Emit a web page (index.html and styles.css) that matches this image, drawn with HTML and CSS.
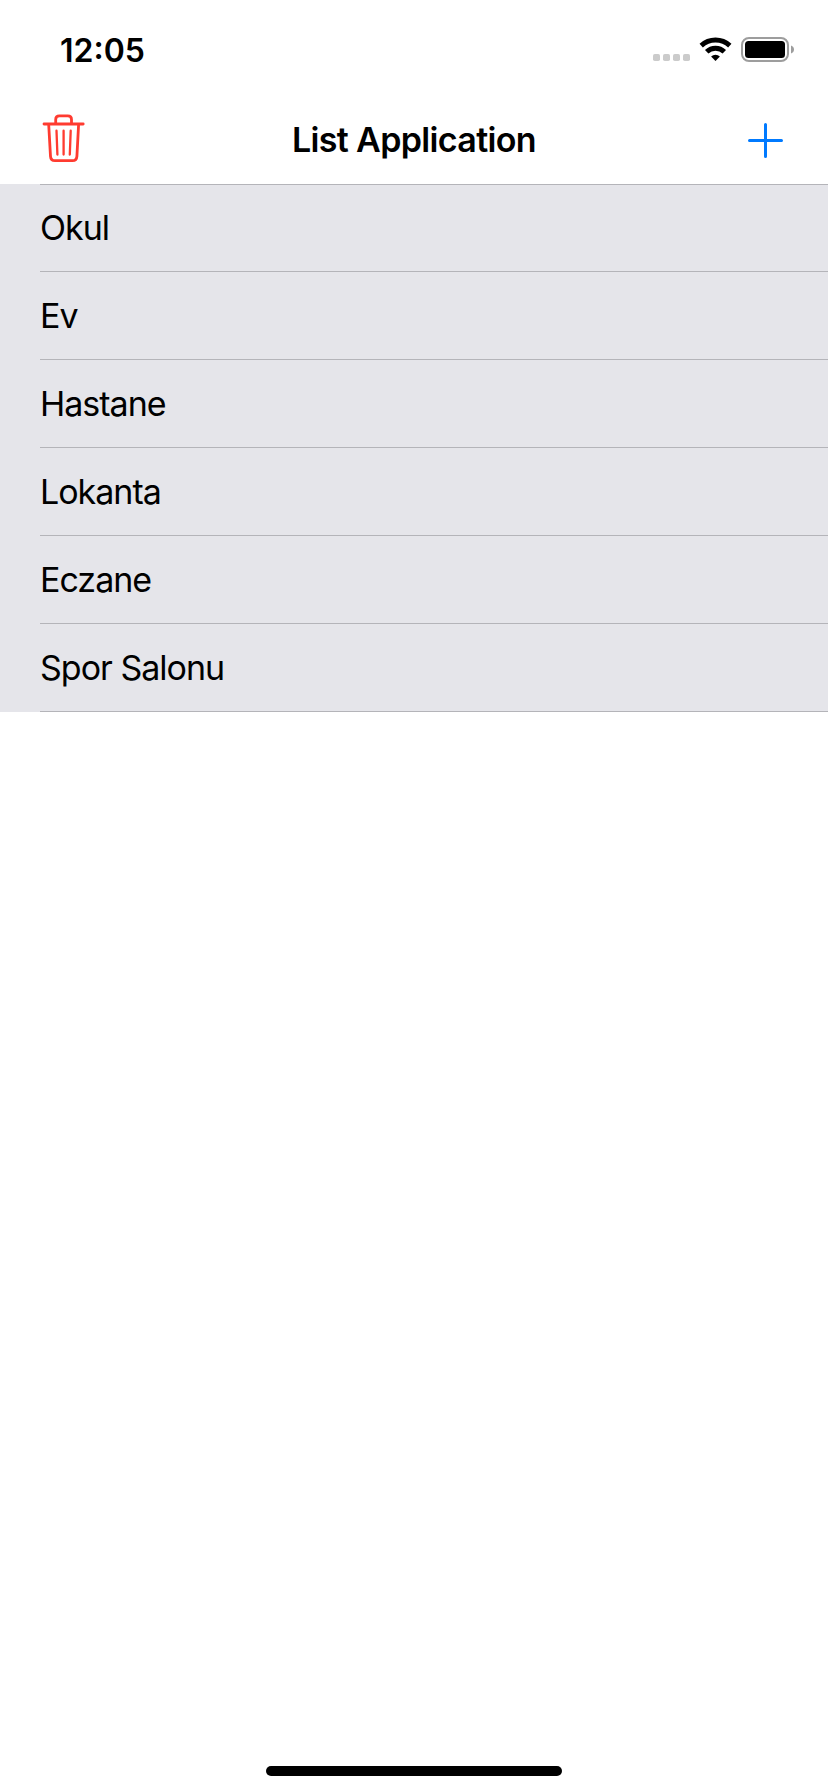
FILE: index.html
```html
<!DOCTYPE html>
<html lang="tr">
<head>
<meta charset="utf-8">
<title>List Application</title>
<link rel="stylesheet" href="styles.css">
</head>
<body>
<div class="screen">
  <header class="status">
    <span class="time">12:05</span>
    <svg class="indicators" width="144" height="30" viewBox="650 34 144 30">
      <g fill="#cbcbcb">
        <rect x="653" y="54" width="7" height="7" rx="1.8"/>
        <rect x="663" y="54" width="7" height="7" rx="1.8"/>
        <rect x="673" y="54" width="7" height="7" rx="1.8"/>
        <rect x="683" y="54" width="7" height="7" rx="1.8"/>
      </g>
      <path d="M701.2 45.6A21 21 0 0 1 729.8 45.6" fill="none" stroke="#000" stroke-width="4.9"/>
      <path d="M706.7 51.8A12.5 12.5 0 0 1 724.3 51.8" fill="none" stroke="#000" stroke-width="4.9"/>
      <path d="M711.1 56.4A6.6 6.6 0 0 1 719.9 56.4L715.5 60.9Z"/>
      <rect x="742" y="38" width="46" height="23" rx="7" fill="none" stroke="#9d9d9d" stroke-width="2"/>
      <rect x="745" y="41" width="40" height="17" rx="3.5"/>
      <path d="M791 45.5Q794 46.7 794 49.5T791 53.5Z" fill="#9d9d9d"/>
    </svg>
  </header>
  <nav class="navbar">
    <button class="tool" aria-label="Sil">
      <svg class="glyph" width="44" height="50" viewBox="42 115 44 50" fill="none" stroke="#ff3b30" stroke-width="2.8" stroke-linecap="round" stroke-linejoin="round">
        <path d="M44 124H83.2M55.7 123V119.5Q55.7 115.8 59.4 115.8H67.8Q71.5 115.8 71.5 119.5V123M48.7 124.5L50.5 156.3Q50.8 160.7 55 160.7H72.5Q76.6 160.7 76.9 156.3L78.6 124.5"/>
        <path d="M56.5 130.7L57.4 154.5M63.6 130.7V154.5M70.7 130.7L69.8 154.5" stroke-width="2.3"/>
      </svg>
    </button>
    <h1 class="title">List Application</h1>
    <button class="tool" aria-label="Ekle">
      <svg class="glyph" width="36" height="36" viewBox="0 0 36 36" stroke="#007aff" stroke-width="3" stroke-linecap="round">
        <path d="M2.5 18.5H34.5M18.5 2.5V34.5"/>
      </svg>
    </button>
  </nav>
  <ul class="list">
    <li class="row">Okul</li>
    <li class="row">Ev</li>
    <li class="row">Hastane</li>
    <li class="row">Lokanta</li>
    <li class="row">Eczane</li>
    <li class="row">Spor Salonu</li>
  </ul>
  <footer class="footer"><div class="home-bar"></div></footer>
</div>
</body>
</html>
```
FILE: styles.css
```css
* {
  box-sizing: border-box;
}

body {
  margin: 0;
  background: #fff;
  color: #000;
  font-family: Inter, "Liberation Sans", sans-serif;
}

.screen {
  display: flex;
  flex-direction: column;
  width: 828px;
  height: 1792px;
}

.status {
  display: flex;
  justify-content: space-between;
  align-items: center;
  height: 96px;
  padding: 2px 34px 0 60px;
}

.time {
  padding-top: 3px;
  font-size: 32px;
  font-weight: 600;
  line-height: 40px;
}

.navbar {
  display: grid;
  grid-template-columns: 44px 1fr 36px;
  align-items: center;
  height: 88px;
  padding: 0 45px 0 42px;
}

.tool {
  display: flex;
  padding: 0;
  border: 0;
  background: none;
}

.glyph {
  overflow: visible;
}

.title {
  margin: 0;
  padding-right: 5px;
  font-size: 34px;
  font-weight: 600;
  line-height: 44px;
  letter-spacing: -0.65px;
  text-align: center;
}

.list {
  margin: 0;
  padding: 0 0 0 40px;
  list-style: none;
  background: #e5e5ea;
}

.row {
  height: 88px;
  border-bottom: 1px solid #b4b4b9;
  font-size: 34px;
  line-height: 88px;
  letter-spacing: -1px;
}

.row:first-child {
  border-top: 1px solid #b4b4b9;
  line-height: 86px;
}

.footer {
  display: flex;
  justify-content: center;
  margin-top: auto;
  padding-bottom: 16px;
}

.home-bar {
  width: 296px;
  height: 10px;
  border-radius: 5px;
  background: #000;
}
```
